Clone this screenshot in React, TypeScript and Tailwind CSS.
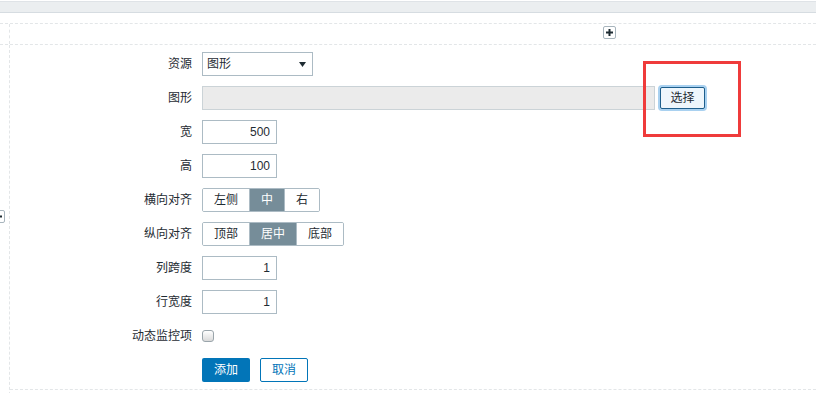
import type { ReactNode } from 'react';

/* 小加号按钮 */
function PlusBox({ className = '' }: { className?: string }) {
  return (
    <div
      className={`flex h-[13px] w-[13px] shrink-0 items-center justify-center rounded-[2px] border border-[#a8b5bd] bg-white ${className}`}
    >
      <svg width="7" height="7" viewBox="0 0 7 7">
        <rect x="2.5" y="0" width="2" height="7" fill="#1f2c33" />
        <rect x="0" y="2.5" width="7" height="2" fill="#1f2c33" />
      </svg>
    </div>
  );
}

function NumberBox({ value }: { value: string }) {
  return (
    <input
      readOnly
      value={value}
      className="h-[24px] w-[75px] border border-[#acbbc4] bg-white pr-[6px] text-right text-[12px] text-[#1f2c33] outline-none"
    />
  );
}

function Segmented({ items, active }: { items: string[]; active: number }) {
  return (
    <div className="inline-flex h-[24px] overflow-hidden rounded-[2px] border border-[#acbbc4]">
      {items.map((item, i) => (
        <div
          key={item}
          className={`flex items-center px-[11px] ${i > 0 ? 'border-l border-[#acbbc4]' : ''} ${
            i === active ? 'border-[#768d99] bg-[#768d99] text-white' : 'bg-white text-[#1f2c33]'
          }`}
        >
          {item}
        </div>
      ))}
    </div>
  );
}

function Row({ label, children }: { label: string; children: ReactNode }) {
  return (
    <>
      <div className="text-right leading-[24px]">{label}</div>
      <div className="flex h-[24px] items-center">{children}</div>
    </>
  );
}

export default function App() {
  return (
    <div className="relative h-[393px] w-[816px] overflow-hidden bg-white font-['Liberation_Sans','Noto_Sans_CJK_SC',sans-serif] text-[12px] text-[#1f2c33]">
      {/* 顶部灰条 */}
      <div className="mt-px h-[12px] border-t border-b border-t-[#dfe3e7] border-b-[#d6dce1] bg-[#ebeef0]" />

      {/* 加号行 */}
      <div className="mt-[10px] flex h-[22px] border-t border-b border-dashed border-[#e3e6e8]">
        <div className="w-[9px] shrink-0" />
        <div className="flex-1 border-l border-dashed border-[#e3e6e8]">
          <PlusBox className="ml-[593px] mt-[2px]" />
        </div>
      </div>

      {/* 表单 */}
      <div className="flex">
        <div className="w-[9px] shrink-0">
          <PlusBox className="-ml-[8px] mt-[165px]" />
        </div>
        <div className="flex-1 border-l border-dashed border-[#e3e6e8]">
          <div className="grid grid-cols-[182px_1fr] gap-x-[10px] gap-y-[10px] border-b border-dashed border-[#e3e6e8] pb-[7px] pt-[7px]">
            <Row label="资源">
              <div className="flex h-[24px] w-[111px] items-center justify-between border border-[#acbbc4] bg-white pl-[4px] pr-[6px]">
                <span>图形</span>
                <svg width="7" height="5" viewBox="0 0 7 5">
                  <path d="M0 0H7L3.5 5Z" fill="#1f2c33" />
                </svg>
              </div>
            </Row>
            <Row label="图形">
              <div className="h-[24px] w-[453px] border border-[#cbd3d7] bg-[#ebebeb]" />
              <button className="ml-[5px] h-[22px] w-[45px] rounded-[2px] border border-[#1d5e8c] bg-[#eef6fc] text-[12px] text-[#1f2c33] shadow-[0_0_0_2px_#a9d1f0]">
                选择
              </button>
            </Row>
            <Row label="宽">
              <NumberBox value="500" />
            </Row>
            <Row label="高">
              <NumberBox value="100" />
            </Row>
            <Row label="横向对齐">
              <Segmented items={['左侧', '中', '右']} active={1} />
            </Row>
            <Row label="纵向对齐">
              <Segmented items={['顶部', '居中', '底部']} active={1} />
            </Row>
            <Row label="列跨度">
              <NumberBox value="1" />
            </Row>
            <Row label="行宽度">
              <NumberBox value="1" />
            </Row>
            <Row label="动态监控项">
              <div className="h-[12px] w-[12px] rounded-[3px] border border-[#9aa5ab] bg-gradient-to-b from-white to-[#dadada]" />
            </Row>
            <div />
            <div className="flex h-[24px] gap-[10px]">
              <button className="h-[24px] w-[48px] rounded-[2px] bg-[#0275b8] text-[12px] text-white">添加</button>
              <button className="h-[24px] w-[48px] rounded-[2px] border border-[#0275b8] bg-white text-[12px] text-[#0275b8]">
                取消
              </button>
            </div>
          </div>
          <div className="h-[20px]" />
        </div>
      </div>

      {/* 红色标注框 */}
      <div className="pointer-events-none absolute left-[643px] top-[61px] h-[76px] w-[98px] border-[3px] border-[#ef3b3b]" />
    </div>
  );
}
